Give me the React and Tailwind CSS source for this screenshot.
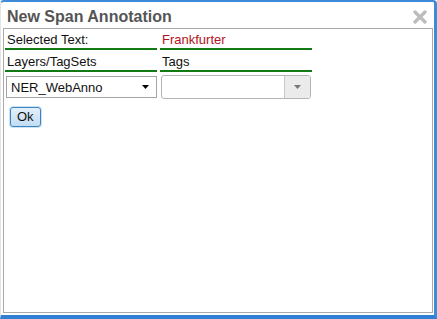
import React from 'react';

const Arrow = ({ className }) => (
      <svg width="7" height="4" viewBox="0 0 7 4" className={className}>
            <path d="M0 0 H7 L3.5 4 Z" fill="currentColor" />
      </svg>
);

const SpanAnnotationDialog = () => {
      return (
            <div className="w-[437px] h-[319px] bg-white border-t-2 border-r-[3px] border-b-4 border-l border-t-[#3d8bd9] border-r-[#3d8bd9] border-b-[#2f80d4] border-l-[#e4e4e4] rounded-t-[4px] flex flex-col font-['Liberation_Sans',Arial,sans-serif]">
                  <div className="h-[26px] flex items-center justify-between pl-[6px] pr-[6px] shrink-0">
                        <span className="text-[16px] font-bold text-[#555555] leading-none mt-[3px]">
                              New Span Annotation
                        </span>
                        <svg width="14" height="14" viewBox="0 0 14 14" className="mt-[4px] mr-[1px]">
                              <path d="M2 2 L12 12 M12 2 L2 12" stroke="#bdbdbd" strokeWidth="3.4" strokeLinecap="round" />
                        </svg>
                  </div>

                  <div className="ml-[2px] mr-[1px] h-[285px] border border-[#a9a9a9] bg-white pt-[2px] pl-[1px]">
                        <div className="grid grid-cols-[152px_152px] gap-x-[3px] gap-y-[3px] text-[13px] leading-[17px]">
                              <div className="border-b-2 border-[#137a13] pl-[2px] text-[#111111]">Selected Text:</div>
                              <div className="border-b-2 border-[#137a13] pl-[2px] text-[#b3121c]">Frankfurter</div>
                              <div className="border-b-2 border-[#137a13] pl-[2px] text-[#111111]">Layers/TagSets</div>
                              <div className="border-b-2 border-[#137a13] pl-[2px] text-[#111111]">Tags</div>

                              <div className="mt-[1px] ml-[1px] h-[22px] border border-[#a5a5a5] bg-white flex items-center justify-between pl-[4px] pr-[7px]">
                                    <span className="text-[#111111]">NER_WebAnno</span>
                                    <Arrow className="text-black" />
                              </div>
                              <div className="ml-[1px] w-[150px] h-[24px] border border-[#b5b5b5] rounded-[3px] bg-white flex overflow-hidden">
                                    <div className="flex-1"></div>
                                    <div className="w-[26px] bg-[#ebebeb] border-l border-[#c8c8c8] flex items-center justify-center">
                                          <Arrow className="text-[#777777]" />
                                    </div>
                              </div>
                        </div>

                        <div className="mt-[5px] ml-[5px]">
                              <button className="h-[20px] px-[6px] border border-[#3c84bf] rounded-[3px] bg-[linear-gradient(#e3f0fb,#c3dcf3)] text-[13px] leading-none text-[#111111] shadow-[0_0_0_1px_#cfe3f5]">
                                    Ok
                              </button>
                        </div>
                  </div>
            </div>
      );
};

export default SpanAnnotationDialog;
